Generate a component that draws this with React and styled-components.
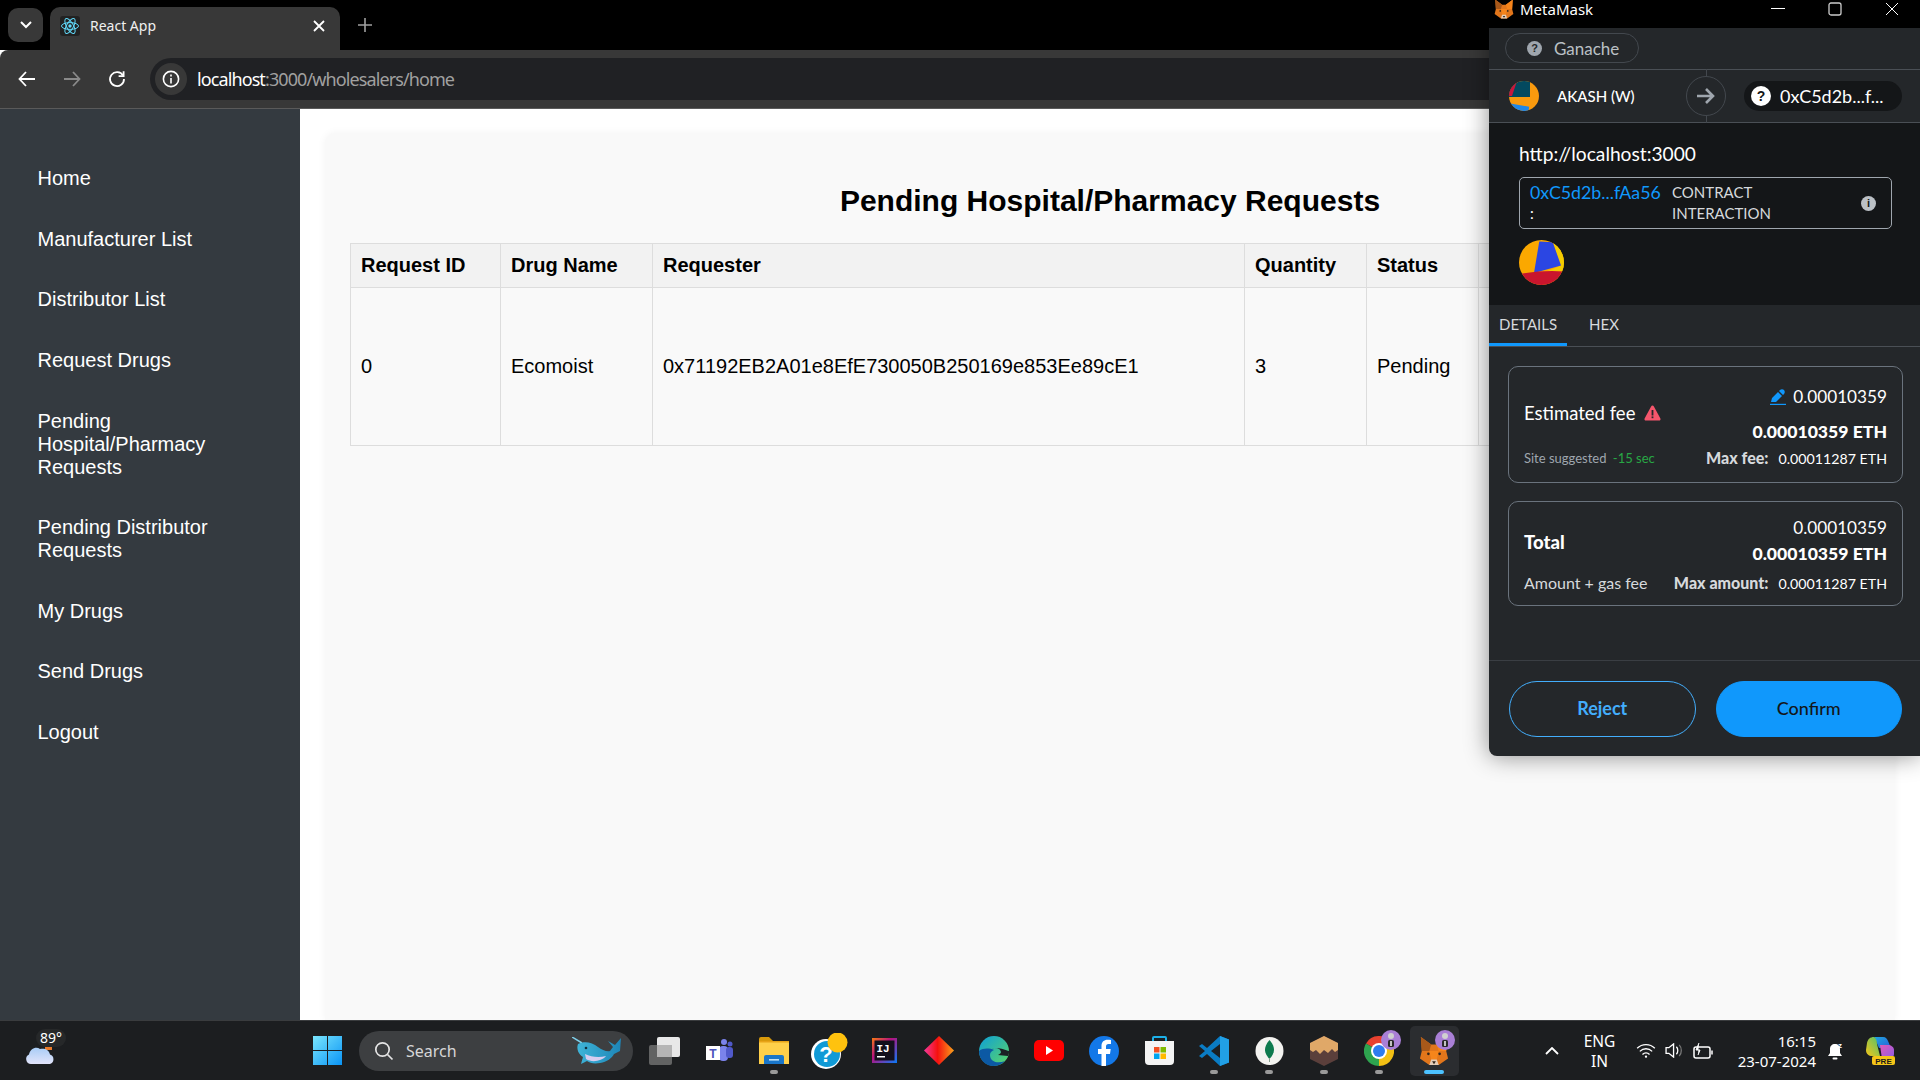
import React from 'react';
import styled, { createGlobalStyle } from 'styled-components';

const SIDE_LINKS = [
  'Home',
  'Manufacturer List',
  'Distributor List',
  'Request Drugs',
  'Pending Hospital/Pharmacy Requests',
  'Pending Distributor Requests',
  'My Drugs',
  'Send Drugs',
  'Logout',
];

const COLUMNS = [
  { title: 'Request ID', width: 150 },
  { title: 'Drug Name', width: 152 },
  { title: 'Requester', width: 592 },
  { title: 'Quantity', width: 122 },
  { title: 'Status', width: 112 },
  { title: 'Action', width: 392 },
];

const ROW = ['0', 'Ecomoist', '0x71192EB2A01e8EfE730050B250169e853Ee89cE1', '3', 'Pending', ''];

// ICONS
const ReactLogo = () => (
  <svg width="20" height="20" viewBox="0 0 20 20" fill="none" stroke="#61dafb" strokeWidth="1">
    <rect x="0" y="0" width="20" height="20" rx="3" fill="#222" stroke="none" />
    <ellipse cx="10" cy="10" rx="8.5" ry="3.4" />
    <ellipse cx="10" cy="10" rx="8.5" ry="3.4" transform="rotate(60 10 10)" />
    <ellipse cx="10" cy="10" rx="8.5" ry="3.4" transform="rotate(120 10 10)" />
    <circle cx="10" cy="10" r="1.7" fill="#61dafb" stroke="none" />
  </svg>
);

const Fox = ({ size = 24 }) => (
  <svg width={size} height={size} viewBox="0 0 32 32">
    <polygon points="2,1 13,9 19,9 30,1 29,16 31,24 21,31 11,31 1,24 3,16" fill="#e2761b" />
    <polygon points="2,1 13,9 11,16 3,16" fill="#a8591a" />
    <polygon points="30,1 19,9 21,16 29,16" fill="#f6851b" />
    <polygon points="11,16 21,16 19,25 13,25" fill="#f6851b" />
    <polygon points="13,25 19,25 21,31 11,31" fill="#e4cdb8" />
    <polygon points="14,27 18,27 16,30" fill="#33261c" />
    <circle cx="10" cy="19" r="1.4" fill="#33261c" />
    <circle cx="22" cy="19" r="1.4" fill="#33261c" />
  </svg>
);

const Identicon = ({ size, children }) => (
  <svg width={size} height={size} viewBox="0 0 30 30">
    <clipPath id={`clip${size}`}>
      <circle cx="15" cy="15" r="15" />
    </clipPath>
    <g clipPath={`url(#clip${size})`}>{children}</g>
  </svg>
);

const TaskView = () => (
  <svg width="31" height="28" viewBox="0 0 31 28">
    <rect x="8" y="0" width="23" height="20" rx="2" fill="#e8e8e8" />
    <rect x="0" y="8" width="23" height="20" rx="2" fill="#6a6a6a" fillOpacity="0.9" />
    <rect x="8" y="8" width="15" height="12" fill="#b5b5b5" />
  </svg>
);

const Teams = () => (
  <svg width="27" height="23" viewBox="0 0 27 23">
    <circle cx="18" cy="3" r="3" fill="#7b83eb" />
    <circle cx="24" cy="5" r="2.5" fill="#5059c9" />
    <rect x="13" y="7" width="9" height="15" rx="4" fill="#7b83eb" />
    <rect x="20" y="8" width="7" height="11" rx="3" fill="#5059c9" />
    <rect x="0" y="7" width="14" height="14" fill="#fff" />
    <text x="7" y="18.5" fontFamily="Liberation Sans" fontSize="12" fontWeight="700" textAnchor="middle" fill="#4b53bc">T</text>
  </svg>
);

const Folder = () => (
  <svg width="30" height="27" viewBox="0 0 30 27">
    <path d="M0 2a2 2 0 0 1 2-2h8l4 4h16v6H0z" fill="#d99a0b" />
    <rect x="0" y="4" width="30" height="23" fill="#ffd04a" />
    <rect x="0" y="4" width="30" height="1.5" fill="#e8a317" />
    <path d="M5 27v-7a2 2 0 0 1 2-2h16a2 2 0 0 1 2 2v7z" fill="#1a76c9" />
    <rect x="10" y="22" width="10" height="1.6" fill="#bfe1f7" />
  </svg>
);

const HelpBadge = () => (
  <svg width="37" height="36" viewBox="0 0 37 36">
    <circle cx="15" cy="21" r="15" fill="#fff" />
    <circle cx="16" cy="21" r="13" fill="#109ad6" />
    <text x="15" y="29" fontFamily="Liberation Sans" fontSize="22" fontWeight="700" textAnchor="middle" fill="#fff">?</text>
    <circle cx="26.5" cy="9.5" r="10" fill="#ffc20e" />
  </svg>
);

const Intellij = () => (
  <svg width="25" height="25" viewBox="0 0 25 25">
    <defs>
      <linearGradient id="ij" x1="0" y1="0" x2="1" y2="1">
        <stop offset="0" stopColor="#f97a12" />
        <stop offset="0.4" stopColor="#b5127f" />
        <stop offset="1" stopColor="#087cfa" />
      </linearGradient>
    </defs>
    <rect width="25" height="25" fill="url(#ij)" />
    <rect x="2.5" y="2.5" width="20" height="20" fill="#13101c" />
    <text x="11" y="13.5" fontFamily="Liberation Mono" fontSize="11" fontWeight="700" textAnchor="middle" fill="#fff">IJ</text>
    <rect x="5" y="18" width="8" height="1.5" fill="#fff" />
  </svg>
);

const Diamond = () => (
  <svg width="30" height="29" viewBox="0 0 30 29">
    <defs>
      <linearGradient id="dia" x1="0" y1="0" x2="1" y2="0">
        <stop offset="0" stopColor="#f4399c" />
        <stop offset="0.45" stopColor="#f5110f" />
        <stop offset="1" stopColor="#f9a11b" />
      </linearGradient>
    </defs>
    <polygon points="15,0 30,14.5 15,29 0,14.5" fill="url(#dia)" />
  </svg>
);

const Edge = () => (
  <svg width="30" height="30" viewBox="0 0 30 30">
    <defs>
      <linearGradient id="edgeTop" x1="0" y1="0" x2="1" y2="1">
        <stop offset="0" stopColor="#0d9fd8" />
        <stop offset="1" stopColor="#5dd764" />
      </linearGradient>
    </defs>
    <circle cx="15" cy="15" r="15" fill="url(#edgeTop)" />
    <path d="M0 15c0 8 6 15 14 15 5 0 9-2 12-5-7 3-15 1-15-6 0-2 1-4 4-5-5-2-11-2-15 1z" fill="#0c59a4" />
    <path d="M13 13c4-2 8-1 9 3 0 1-1 2-3 3l10 1c1-2 1-3 1-5-4-1-12-5-17-2z" fill="#1b2024" />
  </svg>
);

const Youtube = () => (
  <svg width="30" height="21" viewBox="0 0 30 21">
    <rect width="30" height="21" rx="5" fill="#f00" />
    <polygon points="12,6 19,10.5 12,15" fill="#fff" />
  </svg>
);

const Facebook = () => (
  <svg width="30" height="30" viewBox="0 0 30 30">
    <circle cx="15" cy="15" r="15" fill="#1378e8" />
    <path d="M17 30V18h4l.7-5H17v-2.5c0-1.5.7-2.5 2.5-2.5H22V4c-1-.2-2.5-.3-3.5-.3-3.5 0-6 2.3-6 6V13H9v5h3.5v12z" fill="#fff" />
  </svg>
);

const Store = () => (
  <svg width="29" height="29" viewBox="0 0 29 29">
    <path d="M8 6V2a1 1 0 0 1 1-1h11a1 1 0 0 1 1 1v4" fill="none" stroke="#1cb0e8" strokeWidth="2" />
    <path d="M0 5h29v20a4 4 0 0 1-4 4H4a4 4 0 0 1-4-4z" fill="#f4f4f4" />
    <rect x="9" y="11" width="5.5" height="5.5" fill="#f25022" />
    <rect x="15.5" y="11" width="5.5" height="5.5" fill="#7fba00" />
    <rect x="9" y="17.5" width="5.5" height="5.5" fill="#00a4ef" />
    <rect x="15.5" y="17.5" width="5.5" height="5.5" fill="#ffb900" />
  </svg>
);

const VsCode = () => (
  <svg width="30" height="30" viewBox="0 0 30 30">
    <path d="M21 0l9 3.5v23L21 30 8 18l-5 4-3-2 6-5-6-5 3-2 5 4z" fill="#0a7cc4" />
    <path d="M21 0l9 3.5v23L21 30z" fill="#21a0e6" />
    <path d="M21 8l-9 7 9 7z" fill="#1b2024" />
  </svg>
);

const Mongo = () => (
  <svg width="29" height="28" viewBox="0 0 29 28">
    <circle cx="14.5" cy="14" r="14" fill="#f3f3f0" />
    <path d="M14.5 3c3.5 4 4.5 7 4.5 10s-2.5 7-4.5 9c-2-2-4.5-6-4.5-9s1-6 4.5-10z" fill="#0d7a4e" />
    <rect x="14" y="21" width="1" height="4" fill="#86a08e" />
  </svg>
);

const Cube = () => (
  <svg width="28" height="30" viewBox="0 0 28 30">
    <polygon points="14,0 28,7 28,23 14,30 0,23 0,7" fill="#5b3f3b" />
    <polygon points="14,0 28,7 28,14 25,16 22,13 18,17 14,14 10,18 6,14 3,16 0,14 0,7" fill="#e0a868" />
  </svg>
);

const Chrome = () => (
  <svg width="30" height="30" viewBox="0 0 30 30">
    <path d="M15 15L2 7.5A15 15 0 0 1 28 7.5Z" fill="#e8412f" />
    <path d="M15 15L2 7.5A15 15 0 0 0 15 30Z" fill="#2ea44f" />
    <path d="M15 15L15 30A15 15 0 0 0 28 7.5Z" fill="#f2c014" />
    <circle cx="15" cy="15" r="8" fill="#fff" />
    <circle cx="15" cy="15" r="6" fill="#2d7cf0" />
  </svg>
);

const SleepBadge = () => (
  <svg width="20" height="20" viewBox="0 0 20 20">
    <circle cx="10" cy="10" r="10" fill="#a97fd6" />
    <circle cx="10" cy="6" r="3" fill="#d0d0d0" />
    <rect x="7" y="10" width="6" height="7" rx="1.5" fill="#2a2a2a" />
    <rect x="9.2" y="11" width="1.6" height="5" fill="#e8e8e8" />
  </svg>
);

const WinLogo = () => (
  <svg width="29" height="29" viewBox="0 0 29 29">
    <defs>
      <linearGradient id="win" x1="0" y1="0" x2="1" y2="1">
        <stop offset="0" stopColor="#7ae6fd" />
        <stop offset="1" stopColor="#0a94f5" />
      </linearGradient>
    </defs>
    <path d="M0 0h14v14H0zM15 0h14v14H15zM0 15h14v14H0zM15 15h14v14H15z" fill="url(#win)" />
  </svg>
);

const Weather = () => (
  <svg width="30" height="19" viewBox="0 0 30 19">
    <defs>
      <linearGradient id="cloud" x1="0" y1="0" x2="0" y2="1">
        <stop offset="0" stopColor="#a9cdf6" />
        <stop offset="1" stopColor="#e2e4fa" />
      </linearGradient>
    </defs>
    <rect x="20" y="0" width="7" height="5" fill="#ea7a2a" />
    <path d="M6 19a5 5 0 0 1-2-9.5C5 4 11 1 15 4c5-1 9 1 10 5.5A5 5 0 0 1 25 19z" fill="url(#cloud)" />
  </svg>
);

const Whale = () => (
  <svg width="50" height="27" viewBox="0 0 50 27">
    <defs>
      <linearGradient id="whale" x1="0" y1="0" x2="1" y2="0">
        <stop offset="0" stopColor="#3fb4d8" />
        <stop offset="1" stopColor="#1d86b8" />
      </linearGradient>
    </defs>
    <path d="M0 0l10 6" stroke="#7fd0ea" strokeWidth="1.5" />
    <path d="M6 7c6-3 14-2 20 3 4 3 9 5 12 4l3-4-5-6 7 4 6-7-1 13-6 3c-2 4-7 8-14 9-6 1-10 0-13-2l-6 3 2-7C7 18 4 12 6 7z" fill="url(#whale)" />
    <path d="M13 17c6 3 14 4 21 2-4 5-14 7-20 3z" fill="#d6cdf0" />
    <circle cx="14" cy="11" r="1.3" fill="#10303f" />
  </svg>
);

const Copilot = () => (
  <svg width="29" height="28" viewBox="0 0 29 28">
    <defs>
      <linearGradient id="cpA" x1="0" y1="0" x2="1" y2="1">
        <stop offset="0" stopColor="#1fa7e0" />
        <stop offset="1" stopColor="#2b5fd9" />
      </linearGradient>
      <linearGradient id="cpB" x1="0" y1="0" x2="1" y2="1">
        <stop offset="0" stopColor="#e35bb7" />
        <stop offset="1" stopColor="#8a5be8" />
      </linearGradient>
      <linearGradient id="cpC" x1="0" y1="1" x2="1" y2="0">
        <stop offset="0" stopColor="#f5c518" />
        <stop offset="1" stopColor="#4cc26b" />
      </linearGradient>
    </defs>
    <path d="M8 0h9c3 0 4 2 5 4l3 7H13L10 4C10 3 9 1 8 0z" fill="url(#cpA)" />
    <path d="M14 8h8c3 0 6 2 6 5v4c0 3-3 5-6 5h-6z" fill="url(#cpB)" />
    <path d="M8 0C4 0 2 2 1 6l-1 7c0 4 3 6 6 6h8l-3-12C11 4 10 1 8 0z" fill="url(#cpC)" />
    <rect x="6" y="19" width="23" height="9" rx="2" fill="#f5c518" />
    <text x="17.5" y="26.5" fontFamily="Liberation Sans" fontSize="8" fontWeight="700" textAnchor="middle" fill="#1a1a1a">PRE</text>
  </svg>
);

const TASK_ITEMS = [
  { key: 'task', icon: <TaskView /> },
  { key: 'teams', icon: <Teams /> },
  { key: 'files', icon: <Folder />, dot: true },
  { key: 'help', icon: <HelpBadge /> },
  { key: 'idea', icon: <Intellij /> },
  { key: 'diamond', icon: <Diamond /> },
  { key: 'edge', icon: <Edge /> },
  { key: 'yt', icon: <Youtube /> },
  { key: 'fb', icon: <Facebook /> },
  { key: 'store', icon: <Store /> },
  { key: 'code', icon: <VsCode />, dot: true },
  { key: 'mongo', icon: <Mongo />, dot: true },
  { key: 'cube', icon: <Cube />, dot: true },
  { key: 'chrome', icon: <Chrome />, dot: true, badge: true },
  { key: 'fox', icon: <Fox size={30} />, active: true, badge: true },
];

const MetaMask = () => (
  <MaskWindow>
    <MaskTitleBar>
      <Fox size={20} />
      <MaskTitle>MetaMask</MaskTitle>
      <WindowButtons>
        <svg width="14" height="14" viewBox="0 0 14 14" stroke="#fff" strokeWidth="1">
          <path d="M0 6.5h14" />
        </svg>
        <svg width="14" height="14" viewBox="0 0 14 14" stroke="#ccc" strokeWidth="1.3" fill="none">
          <rect x="1" y="1" width="12" height="12" rx="2" />
        </svg>
        <svg width="14" height="14" viewBox="0 0 14 14" stroke="#fff" strokeWidth="1">
          <path d="M1 1l12 12M13 1L1 13" />
        </svg>
      </WindowButtons>
    </MaskTitleBar>

    <NetworkBar>
      <NetworkPill>
        <HelpDot $size={15} $bg="#9fa6ae" $fg="#24272a">?</HelpDot>
        Ganache
      </NetworkPill>
    </NetworkBar>

    <AccountBar>
      <AccountName>
        <Identicon size={30}>
          <rect width="30" height="30" fill="#f99a0e" />
          <rect x="-4" y="24" width="24" height="10" fill="#1f87e8" transform="rotate(10 10 26)" />
          <rect x="-2" y="-2" width="23" height="18" fill="#03495f" />
          <polygon points="0,0 8,0 3,15 0,15" fill="#c8163c" />
        </Identicon>
        <span>AKASH (W)</span>
      </AccountName>
      <ArrowCircle>
        <svg width="20" height="18" viewBox="0 0 20 18" fill="none" stroke="#9fa6ae" strokeWidth="2.6">
          <path d="M1 9h16M10 2l7 7-7 7" />
        </svg>
      </ArrowCircle>
      <TargetPill>
        <HelpDot $size={20} $bg="#fff" $fg="#141618">?</HelpDot>
        0xC5d2b...f...
      </TargetPill>
    </AccountBar>

    <OriginPanel>
      <OriginUrl>http://localhost:3000</OriginUrl>
      <ContractBox>
        <ContractAddress>
          <ContractLink>0xC5d2b...fAa56</ContractLink>
          <span>:</span>
        </ContractAddress>
        <ContractKind>CONTRACT INTERACTION</ContractKind>
        <InfoSlot>
          <HelpDot $size={15} $bg="#bbc0c5" $fg="#141618">i</HelpDot>
        </InfoSlot>
      </ContractBox>
      <Identicon size={45}>
        <rect width="30" height="30" fill="#fba800" />
        <polygon points="22,0 30,0 30,21 16,22 28,17" fill="#f5cc00" />
        <polygon points="13.5,1 22.5,1.5 28,17 10,22" fill="#2b46e3" />
        <path d="M0 22.7Q15 20 30 21V30H0z" fill="#c9152d" />
      </Identicon>
    </OriginPanel>

    <TabBar>
      <MaskTab $active>DETAILS</MaskTab>
      <MaskTab>HEX</MaskTab>
    </TabBar>

    <DetailsPanel>
      <FeeBox>
        <FeeRow>
          <FeeLabel>
            Estimated fee
            <svg width="17" height="16" viewBox="0 0 17 16">
              <path d="M8.5 0.5c.6 0 1.1.3 1.4.9l6.5 12c.5 1-.2 2.1-1.4 2.1H2c-1.2 0-1.9-1.1-1.4-2.1l6.5-12c.3-.6.8-.9 1.4-.9z" fill="#f5566c" />
              <rect x="7.6" y="5" width="1.8" height="5.5" fill="#24272a" />
              <rect x="7.6" y="11.4" width="1.8" height="1.8" fill="#24272a" />
            </svg>
          </FeeLabel>
          <FeeAmounts>
            <FeeValue>
              <svg width="16" height="16" viewBox="0 0 16 16" fill="#1098fc">
                <path d="M1 13l1-4 6-6 4 4-6 6zM9 2l1-1c1-1 3-1 4 0s1 3 0 4l-1 1z" />
                <rect x="0" y="14.8" width="16" height="1.2" />
              </svg>
              0.00010359
            </FeeValue>
            <FeeStrong>0.00010359 ETH</FeeStrong>
          </FeeAmounts>
        </FeeRow>
        <FeeFoot>
          <SiteHint>
            Site suggested <Eta>-15 sec</Eta>
          </SiteHint>
          <MaxLine>
            <b>Max fee:</b>0.00011287 ETH
          </MaxLine>
        </FeeFoot>
      </FeeBox>

      <TotalBox>
        <FeeRow>
          <TotalLabel>Total</TotalLabel>
          <FeeAmounts $tight>
            <FeeValue>0.00010359</FeeValue>
            <FeeStrong>0.00010359 ETH</FeeStrong>
          </FeeAmounts>
        </FeeRow>
        <FeeFoot $tight>
          <AmountHint>Amount + gas fee</AmountHint>
          <MaxLine>
            <b>Max amount:</b>0.00011287 ETH
          </MaxLine>
        </FeeFoot>
      </TotalBox>
    </DetailsPanel>

    <ActionBar>
      <RejectButton>Reject</RejectButton>
      <ConfirmButton>Confirm</ConfirmButton>
    </ActionBar>
  </MaskWindow>
);

const App = () => (
  <>
    <GlobalStyle />
    <Screen>
      <TabStrip>
        <TabSearch>
          <svg width="14" height="10" viewBox="0 0 14 10" fill="none" stroke="#fff" strokeWidth="2">
            <path d="M2 2l5 5 5-5" />
          </svg>
        </TabSearch>
        <ActiveTab>
          <ReactLogo />
          <TabTitle>React App</TabTitle>
          <svg width="12" height="12" viewBox="0 0 12 12" stroke="#fff" strokeWidth="1.8">
            <path d="M1 1l10 10M11 1L1 11" />
          </svg>
        </ActiveTab>
        <NewTab>
          <svg width="14" height="14" viewBox="0 0 14 14" stroke="#a0a0a0" strokeWidth="1.6">
            <path d="M7 0v14M0 7h14" />
          </svg>
        </NewTab>
      </TabStrip>

      <Toolbar>
        <NavIcons>
          <svg width="18" height="16" viewBox="0 0 18 16" fill="none" stroke="#fff" strokeWidth="1.8">
            <path d="M17 8H2M8 1L1.5 8 8 15" />
          </svg>
          <svg width="18" height="16" viewBox="0 0 18 16" fill="none" stroke="#8a8a8a" strokeWidth="1.8">
            <path d="M1 8h15M10 1l6.5 7L10 15" />
          </svg>
          <svg width="18" height="18" viewBox="0 0 18 18" fill="none" stroke="#fff" strokeWidth="1.8">
            <path d="M15 5.5A7 7 0 1 0 16 9" />
            <path d="M15.6 1.2v5h-5" />
          </svg>
        </NavIcons>
        <Omnibox>
          <InfoChip>
            <svg width="18" height="18" viewBox="0 0 18 18" fill="none" stroke="#fff" strokeWidth="1.6">
              <circle cx="9" cy="9" r="7.6" />
              <path d="M9 8v5.5M9 4.6v2" />
            </svg>
          </InfoChip>
          <UrlHost>localhost</UrlHost>
          <UrlPath>:3000/wholesalers/home</UrlPath>
        </Omnibox>
      </Toolbar>

      <Body>
        <Sidebar>
          <SideList>
            {SIDE_LINKS.map((link) => (
              <SideItem key={link}>{link}</SideItem>
            ))}
          </SideList>
        </Sidebar>
        <Main>
          <Card>
            <Title>Pending Hospital/Pharmacy Requests</Title>
            <Table>
              <thead>
                <tr>
                  {COLUMNS.map((col) => (
                    <HeadCell key={col.title} $width={col.width}>
                      {col.title}
                    </HeadCell>
                  ))}
                </tr>
              </thead>
              <tbody>
                <tr>
                  {ROW.map((cell, i) => (
                    <Cell key={i}>{cell}</Cell>
                  ))}
                </tr>
              </tbody>
            </Table>
          </Card>
        </Main>
      </Body>

      <Taskbar>
        <WeatherSlot>
          <Weather />
          <Temp>89°</Temp>
        </WeatherSlot>
        <StartButton>
          <WinLogo />
        </StartButton>
        <SearchBox>
          <svg width="20" height="20" viewBox="0 0 20 20" fill="none" stroke="#e4e4e4" strokeWidth="1.7">
            <circle cx="8.5" cy="8.5" r="6.7" />
            <path d="M13.5 13.5l5 5" />
          </svg>
          <SearchText>Search</SearchText>
          <Whale />
        </SearchBox>
        <TaskIcons>
          {TASK_ITEMS.map((item) => (
            <TaskItem key={item.key} $active={item.active}>
              {item.icon}
              {item.badge && (
                <BadgeSlot $active={item.active}>
                  <SleepBadge />
                </BadgeSlot>
              )}
              {(item.dot || item.active) && <TaskDot $active={item.active} />}
            </TaskItem>
          ))}
        </TaskIcons>
        <Tray>
          <svg width="14" height="8" viewBox="0 0 14 8" fill="none" stroke="#fff" strokeWidth="1.8">
            <path d="M1 7l6-6 6 6" />
          </svg>
          <LangBlock>
            <span>ENG</span>
            <span>IN</span>
          </LangBlock>
          <TrayIcons>
            <svg width="20" height="15" viewBox="0 0 22 17" fill="none" stroke="#fff" strokeWidth="1.5">
              <path d="M1 6c5.5-5.5 14.5-5.5 20 0M4 9.5c4-4 10-4 14 0M7 13c2.3-2.2 5.7-2.2 8 0" />
              <circle cx="11" cy="15.5" r="1.3" fill="#fff" stroke="none" />
            </svg>
            <svg width="19" height="15" viewBox="0 0 20 16" fill="none" stroke="#fff" strokeWidth="1.4">
              <path d="M1 5h3l5-4v14l-5-4H1z" />
              <path d="M12 4c2 2 2 6 0 8" />
              <path d="M15 2c3 3 3 9 0 12" stroke="#777" />
            </svg>
            <svg width="20" height="16" viewBox="0 0 20 16" fill="none" stroke="#fff" strokeWidth="1.5">
              <rect x="1" y="4" width="16" height="11" rx="2" />
              <path d="M19 7.5v4" />
              <path d="M6 0l-3 7h4l-2 5" fill="#fff" strokeWidth="1" />
            </svg>
          </TrayIcons>
          <Clock>
            <span>16:15</span>
            <span>23-07-2024</span>
          </Clock>
          <BellSlot>
            <svg width="16" height="20" viewBox="0 0 16 20" fill="#fff">
              <path d="M7 3C4 3 2 5 2 8v4l-2 3h14l-2-3V8c0-3-2-5-5-5z" />
              <rect x="4.5" y="16.5" width="5" height="2" rx="1" />
              <text x="10" y="7" fontFamily="Liberation Sans" fontSize="8" fontWeight="700">z</text>
            </svg>
          </BellSlot>
          <Copilot />
        </Tray>
      </Taskbar>

      <MetaMask />
    </Screen>
  </>
);

const GlobalStyle = createGlobalStyle`
  html, body {
    margin: 0;
    padding: 0;
    background: #fff;
  }

  * {
    box-sizing: border-box;
  }
`;

const Screen = styled.div`
  position: relative;
  width: 1920px;
  height: 1080px;
  overflow: hidden;
  display: flex;
  flex-direction: column;
  font-family: 'Liberation Sans', Arial, sans-serif;
`;

// BROWSER
const TabStrip = styled.div`
  height: 50px;
  background: #000;
  display: flex;
  align-items: flex-end;
  padding-left: 8px;
`;

const TabSearch = styled.div`
  width: 35px;
  height: 34px;
  margin-bottom: 8px;
  border-radius: 10px;
  background: #383838;
  display: flex;
  align-items: center;
  justify-content: center;
`;

const ActiveTab = styled.div`
  width: 290px;
  height: 43px;
  margin-left: 7px;
  padding: 0 15px 6px 10px;
  border-radius: 10px 10px 0 0;
  background: #383838;
  display: flex;
  align-items: center;
`;

const TabTitle = styled.span`
  flex: 1;
  margin-left: 10px;
  font: 14px 'Noto Sans', sans-serif;
  color: #f0f0f0;
`;

const NewTab = styled.div`
  margin: 0 0 12px 18px;
  display: flex;
  align-items: center;
  height: 26px;
`;

const Toolbar = styled.div`
  height: 59px;
  padding-bottom: 1px;
  background: #383838;
  border-bottom: 1px solid #5a5a5a;
  border-radius: 8px 0 0 0;
  display: flex;
  align-items: center;
`;

const NavIcons = styled.div`
  width: 150px;
  padding-left: 18px;
  display: flex;
  align-items: center;
  gap: 27px;
`;

const Omnibox = styled.div`
  flex: 1;
  height: 42px;
  padding-left: 5px;
  border-radius: 21px 0 0 21px;
  background: #202124;
  display: flex;
  align-items: center;
  font: 18px 'Noto Sans', sans-serif;
  letter-spacing: -0.9px;
`;

const InfoChip = styled.div`
  width: 32px;
  height: 32px;
  margin-right: 10px;
  border-radius: 50%;
  background: #383838;
  display: flex;
  align-items: center;
  justify-content: center;
`;

const UrlHost = styled.span`
  color: #fff;
`;

const UrlPath = styled.span`
  color: #a0a0a0;
`;

// PAGE
const Body = styled.div`
  flex: 1;
  min-height: 0;
  display: flex;
`;

const Sidebar = styled.aside`
  width: 300px;
  background: #343a40;
`;

const SideList = styled.ul`
  list-style: none;
  margin: 0;
  padding: 39.5px 30px 0 37.5px;
`;

const SideItem = styled.li`
  padding: 18.8px 0;
  font-size: 20px;
  line-height: 23px;
  color: #fff;
`;

const Main = styled.main`
  flex: 1;
  min-width: 0;
  padding: 24px 25px 0;
  background: #fff;
`;

const Card = styled.section`
  height: 100%;
  padding: 46px 25px 0;
  border-radius: 10px 10px 0 0;
  background: #f9f9f9;
  box-shadow: 0 0 8px rgba(0, 0, 0, 0.05);
`;

const Title = styled.h2`
  margin: 0 0 21px;
  font-size: 30px;
  line-height: 43px;
  font-weight: 700;
  text-align: center;
  color: #000;
`;

const Table = styled.table`
  width: 1520px;
  table-layout: fixed;
  border-collapse: collapse;
  font-size: 20px;
  color: #000;
`;

const HeadCell = styled.th`
  width: ${({ $width }) => $width}px;
  height: 44px;
  padding: 0 10px;
  border: 1px solid #ddd;
  background: #f2f2f2;
  text-align: left;
  font-weight: 700;
`;

const Cell = styled.td`
  height: 158px;
  padding: 0 10px;
  border: 1px solid #ddd;
`;

// TASKBAR
const Taskbar = styled.footer`
  height: 60px;
  background: #1c1e20;
  border-top: 1px solid #3a3c3e;
  display: flex;
  align-items: center;
  color: #fff;
  font-family: 'Noto Sans', sans-serif;
`;

const WeatherSlot = styled.div`
  position: relative;
  width: 313px;
  height: 100%;
  padding: 24px 0 0 25px;
`;

const Temp = styled.span`
  position: absolute;
  left: 36px;
  top: 8px;
  padding: 1px 4px;
  border-radius: 10px;
  background: #262829;
  font-size: 14px;
  line-height: 16px;
`;

const StartButton = styled.div`
  display: flex;
  width: 46px;
`;

const SearchBox = styled.div`
  width: 274px;
  height: 40px;
  padding: 0 11px 0 15px;
  border-radius: 20px;
  background: #3d3f41;
  display: flex;
  align-items: center;
  font-size: 16px;
  color: #d6d6d6;
`;

const SearchText = styled.span`
  flex: 1;
  margin-left: 12px;
`;

const TaskIcons = styled.div`
  display: flex;
  margin-left: 3.5px;
`;

const TaskItem = styled.div`
  position: relative;
  width: ${({ $active }) => ($active ? 49 : 55)}px;
  height: 50px;
  margin: 0 ${({ $active }) => ($active ? 3 : 0)}px;
  border-radius: 5px;
  display: flex;
  align-items: center;
  justify-content: center;
  background: ${({ $active }) => ($active ? '#2b2d30' : 'transparent')};
`;

const BadgeSlot = styled.span`
  position: absolute;
  top: 4px;
  right: ${({ $active }) => ($active ? 4 : 6)}px;
  display: flex;
`;

const TaskDot = styled.span`
  position: absolute;
  bottom: 2px;
  left: 50%;
  transform: translateX(-50%);
  width: ${({ $active }) => ($active ? 20 : 8)}px;
  height: 4px;
  border-radius: 2px;
  background: ${({ $active }) => ($active ? '#4cc2ff' : '#9a9a9a')};
`;

const Tray = styled.div`
  flex: 1;
  padding: 0 25px 0 83px;
  display: flex;
  align-items: center;
`;

const LangBlock = styled.div`
  width: 64px;
  margin-left: 9px;
  display: flex;
  flex-direction: column;
  align-items: center;
  font-size: 15.5px;
  line-height: 20px;
`;

const TrayIcons = styled.div`
  margin-left: 4px;
  display: flex;
  align-items: center;
  gap: 9px;
`;

const Clock = styled.div`
  width: 100px;
  margin-left: auto;
  display: flex;
  flex-direction: column;
  align-items: flex-end;
  font-size: 15px;
  line-height: 20px;
`;

const BellSlot = styled.div`
  margin: 0 22px 0 12px;
  display: flex;
`;

// METAMASK WINDOW
const MaskWindow = styled.div`
  position: absolute;
  top: 0;
  right: 0;
  width: 431px;
  height: 756px;
  border-radius: 0 0 0 8px;
  overflow: hidden;
  background: #24272a;
  box-shadow: 0 0 24px rgba(0, 0, 0, 0.45);
  display: flex;
  flex-direction: column;
  font-family: Lato, sans-serif;
  color: #fff;
`;

const MaskTitleBar = styled.div`
  height: 28px;
  padding: 0 0 10px 5px;
  background: #000;
  display: flex;
  align-items: center;
`;

const MaskTitle = styled.span`
  flex: 1;
  margin-left: 6px;
  font: 15px 'Noto Sans', sans-serif;
`;

const WindowButtons = styled.div`
  display: flex;
  gap: 43px;
  padding-right: 21px;
`;

const NetworkBar = styled.div`
  height: 42px;
  padding: 5px 0 0 16px;
  border-bottom: 1px solid #4a4f55;
`;

const NetworkPill = styled.div`
  width: 134px;
  height: 30px;
  padding-left: 21px;
  border: 1px solid #43484e;
  border-radius: 15px;
  display: flex;
  align-items: center;
  gap: 12px;
  font-size: 17px;
  color: #bbc0c5;
`;

const HelpDot = styled.span`
  flex: none;
  width: ${({ $size }) => $size}px;
  height: ${({ $size }) => $size}px;
  border-radius: 50%;
  background: ${({ $bg }) => $bg};
  color: ${({ $fg }) => $fg};
  font-family: 'Liberation Sans', sans-serif;
  font-size: ${({ $size }) => Math.round($size * 0.72)}px;
  font-weight: 700;
  display: flex;
  align-items: center;
  justify-content: center;
`;

const AccountBar = styled.div`
  height: 53px;
  padding: 0 18px 0 20px;
  border-bottom: 1px solid #4a4f55;
  display: flex;
  align-items: center;
`;

const AccountName = styled.div`
  width: 177px;
  display: flex;
  align-items: center;
  gap: 18px;
  font-size: 15px;
  font-weight: 500;
`;

const ArrowCircle = styled.div`
  position: relative;
  width: 40px;
  height: 40px;
  border: 1px solid #43484e;
  border-radius: 50%;
  display: flex;
  align-items: center;
  justify-content: center;

  &::before,
  &::after {
    content: '';
    position: absolute;
    left: 50%;
    width: 1px;
    height: 7px;
    background: #43484e;
  }

  &::before {
    top: -8px;
  }

  &::after {
    bottom: -8px;
  }
`;

const TargetPill = styled.div`
  flex: 1;
  height: 30px;
  margin-left: 18px;
  padding-left: 7px;
  border-radius: 15px;
  background: #141618;
  display: flex;
  align-items: center;
  gap: 9px;
  font-size: 18px;
`;

const OriginPanel = styled.div`
  height: 182px;
  padding: 20px 28px 0 30px;
  background: #141618;
`;

const OriginUrl = styled.div`
  font-size: 19.2px;
  line-height: 22px;
  margin-bottom: 12px;
`;

const ContractBox = styled.div`
  height: 52px;
  margin-bottom: 11px;
  padding: 0 10px;
  border: 1px solid #9fa6ae;
  border-radius: 5px;
  display: flex;
  align-items: center;
  font-size: 15px;
  line-height: 21px;
`;

const ContractAddress = styled.div`
  width: 142px;
  display: flex;
  flex-direction: column;
`;

const ContractLink = styled.span`
  color: #1098fc;
  font-size: 17.8px;
`;

const ContractKind = styled.div`
  flex: 1;
  max-width: 120px;
  margin-right: auto;
  color: #d6d9dc;
`;

const InfoSlot = styled.div`
  margin-right: 5px;
`;

const TabBar = styled.div`
  height: 42px;
  border-bottom: 1px solid #4a4f55;
  display: flex;
`;

const MaskTab = styled.div`
  padding: 0 10px;
  min-width: ${({ $active }) => ($active ? '78px' : '0')};
  margin-right: 12px;
  border-bottom: 3px solid ${({ $active }) => ($active ? '#1098fc' : 'transparent')};
  display: flex;
  align-items: center;
  font-size: 15px;
  color: #d6d9dc;
`;

const DetailsPanel = styled.div`
  flex: 1;
  padding: 19px 17px 0 19px;
  display: flex;
  flex-direction: column;
  gap: 18px;
  border-bottom: 1px solid #3a3e43;
`;

const FeeBox = styled.div`
  height: 117px;
  padding: 18px 15px 0;
  border: 1px solid #6a737d;
  border-radius: 10px;
`;

const TotalBox = styled(FeeBox)`
  height: 105px;
  padding-top: 14px;
`;

const FeeRow = styled.div`
  display: flex;
  justify-content: space-between;
  align-items: center;
`;

const FeeLabel = styled.div`
  display: flex;
  align-items: center;
  gap: 9px;
  margin-top: -2px;
  font-size: 18.5px;
`;

const TotalLabel = styled.div`
  margin-top: 2px;
  font-size: 18.5px;
  font-weight: 900;
`;

const FeeAmounts = styled.div`
  display: flex;
  flex-direction: column;
  align-items: flex-end;
  gap: ${({ $tight }) => ($tight ? 3 : 12)}px;
`;

const FeeValue = styled.div`
  display: flex;
  align-items: center;
  gap: 7px;
  font-size: 17.2px;
  line-height: 24px;
`;

const FeeStrong = styled.div`
  font-size: 17.6px;
  line-height: 22px;
  font-weight: 900;
`;

const FeeFoot = styled.div`
  margin-top: ${({ $tight }) => ($tight ? 8 : 5)}px;
  display: flex;
  justify-content: space-between;
  align-items: center;
`;

const SiteHint = styled.span`
  font-size: 13px;
  color: #9fa6ae;
`;

const Eta = styled.span`
  margin-left: 3px;
  color: #28a745;
`;

const AmountHint = styled.span`
  font-size: 16px;
  color: #d6d9dc;
`;

const MaxLine = styled.span`
  font-size: 14.2px;

  & b {
    margin-right: 10px;
    font-size: 16px;
    font-weight: 900;
    color: #d6d9dc;
  }
`;

const ActionBar = styled.div`
  height: 95px;
  padding: 20px 18px 0 20px;
  display: flex;
  gap: 20px;
`;

const RejectButton = styled.button`
  flex: 1;
  height: 56px;
  padding: 0 0 3px;
  border: 1px solid #43aefc;
  border-radius: 28px;
  background: transparent;
  font: 700 18px Lato, sans-serif;
  color: #43aefc;
`;

const ConfirmButton = styled(RejectButton)`
  border-color: #1098fc;
  background: #1098fc;
  font-weight: 500;
  color: #141618;
`;

export default App;
